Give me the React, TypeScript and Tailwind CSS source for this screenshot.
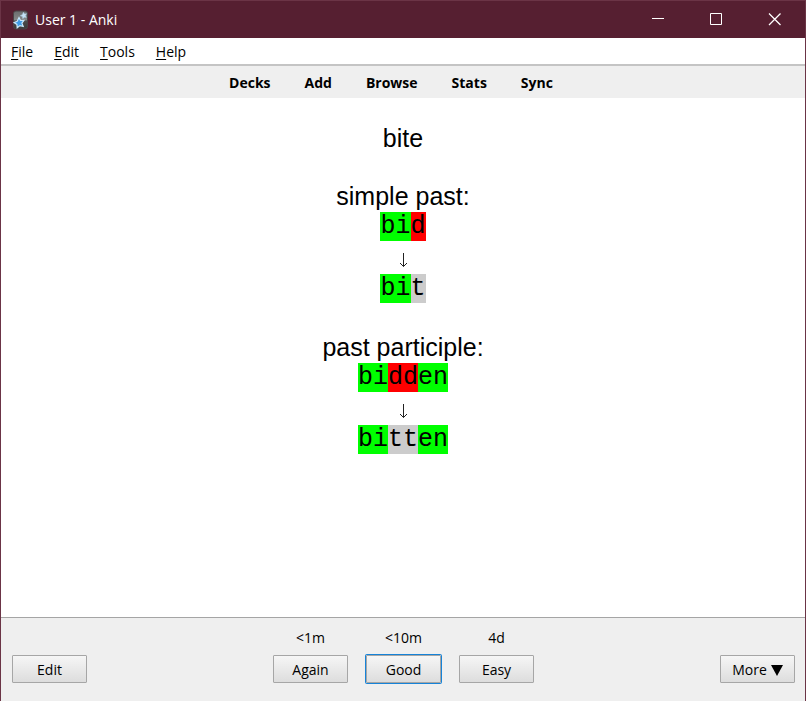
import type { ReactNode } from "react";

function AnkiIcon() {
  return (
    <svg width="16" height="20" viewBox="0 0 16 20" aria-hidden="true">
      <defs>
        <linearGradient id="card" x1="0" y1="0" x2="0" y2="1">
          <stop offset="0" stopColor="#6a6c6d" />
          <stop offset="0.5" stopColor="#858888" />
          <stop offset="0.55" stopColor="#4c4c4c" />
          <stop offset="1" stopColor="#3a3a3a" />
        </linearGradient>
      </defs>
      <rect x="1.5" y="1" width="14" height="18" rx="2.5" fill="url(#card)" stroke="#4a4346" />
      <path d="M11.5 2.2l1 1.7 2-.2-1 1.9.8 1.9-2-.3-1.5 1.5-.4-2.1-2.1-.9 1.9-.9z" fill="#c5e2f5" stroke="#a9cbe0" strokeWidth=".5" />
      <path
        d="M7 7.6l1.5 2.9 3.4-.2-2 2.8 1.3 3.3-3.3-.8-2.7 2.2-.3-3.4-2.8-1.8 3.1-1.4z"
        fill="#3f9be6"
        stroke="#c9e6f8"
        strokeWidth="1.2"
      />
    </svg>
  );
}

function WindowButton({ label, children }: { label: string; children: ReactNode }) {
  return (
    <button type="button" aria-label={label} className="flex h-9 w-[58px] items-center justify-center">
      <svg width="13" height="13" viewBox="0 0 13 13" fill="none" stroke="#fff" aria-hidden="true">
        {children}
      </svg>
    </button>
  );
}

const menus = ["File", "Edit", "Tools", "Help"];
const links = ["Decks", "Add", "Browse", "Stats", "Sync"];

type Kind = "same" | "wrong" | "missed";
const kindClass: Record<Kind, string> = {
  same: "bg-[#00ff00]",
  wrong: "bg-[#ff0000]",
  missed: "bg-[#cccccc]",
};

function Word({ parts }: { parts: [string, Kind][] }) {
  return (
    <div className="flex justify-center font-['Liberation_Mono',monospace]">
      {parts.map(([text, kind], i) => (
        <span key={i} className={kindClass[kind]}>
          {text}
        </span>
      ))}
    </div>
  );
}

function Comparison({ title, typed, correct }: { title: string; typed: [string, Kind][]; correct: [string, Kind][] }) {
  return (
    <section>
      <h2 className="pb-px">{title}</h2>
      <Word parts={typed} />
      <div className="flex h-[33px] items-center justify-center pt-1.5">
        <svg width="9" height="15" viewBox="0 0 9 15" fill="none" stroke="#222" aria-label="corrected to" role="img">
          <path d="M4.5 0v13.5M1 10l3.5 3.5L8 10" />
        </svg>
      </div>
      <Word parts={correct} />
    </section>
  );
}

function PushButton({ children, focused = false }: { children: ReactNode; focused?: boolean }) {
  return (
    <button
      type="button"
      className={
        "flex h-7 w-[75px] items-center justify-center gap-1 rounded-[1px] border border-[#a6a6a6] bg-linear-to-b from-[#f6f6f6] to-[#dddddd] pt-0.5 " +
        (focused ? "shadow-[0_0_0_1px_#1683d8]" : "")
      }
    >
      {children}
    </button>
  );
}

function Answer({ interval, label, focused }: { interval: string; label: string; focused?: boolean }) {
  return (
    <div className="flex flex-col items-center gap-[7px]">
      <span className="leading-5">{interval}</span>
      <PushButton focused={focused}>{label}</PushButton>
    </div>
  );
}

export default function App() {
  return (
    <div className="flex h-screen flex-col border-x border-[#6b3446] bg-white font-['Open_Sans','Noto_Sans',sans-serif] text-sm text-black">
      <header className="flex h-[38px] shrink-0 items-center border-t border-[#6b3446] bg-[#561f31] pr-0.5 pl-[11px] text-white">
        <AnkiIcon />
        <h1 className="ml-[7px] flex-1 text-sm">User 1 - Anki</h1>
        <WindowButton label="Minimize">
          <path d="M0 5.5h12" />
        </WindowButton>
        <WindowButton label="Maximize">
          <path d="M.5.5h11v11H.5z" />
        </WindowButton>
        <WindowButton label="Close">
          <path d="M1 .5l11.5 11.5M12.5 .5l-11.5 11.5" strokeWidth="1.3" />
        </WindowButton>
      </header>

      <nav aria-label="Menu" className="flex h-7 shrink-0 items-center gap-[21px] border-b-2 border-[#c4c4c4] px-2.5 pt-0.5">
        {menus.map((m) => (
          <button key={m} type="button">
            <span className="underline underline-offset-2">{m[0]}</span>
            {m.slice(1)}
          </button>
        ))}
      </nav>

      <nav
        aria-label="Main"
        className="flex h-8 shrink-0 items-center justify-center gap-[34px] bg-[#efefef] pt-0.5 pr-6 font-bold"
      >
        {links.map((l) => (
          <a key={l} href="#">
            {l}
          </a>
        ))}
      </nav>

      <main className="min-h-0 flex-1 overflow-hidden pt-[26px] text-center font-['Liberation_Sans',sans-serif] text-[25px] leading-[29px]">
        <p className="mb-[29px]">bite</p>
        <div className="flex flex-col gap-[30px]">
          <Comparison
            title="simple past:"
            typed={[["bi", "same"], ["d", "wrong"]]}
            correct={[["bi", "same"], ["t", "missed"]]}
          />
          <Comparison
            title="past participle:"
            typed={[["bi", "same"], ["dd", "wrong"], ["en", "same"]]}
            correct={[["bi", "same"], ["tt", "missed"], ["en", "same"]]}
          />
        </div>
      </main>

      <footer className="grid h-[84px] shrink-0 grid-cols-[1fr_auto_1fr] items-end border-t border-[#a5a5a5] bg-[#efefef] pr-2.5 pb-[18px] pl-[11px]">
        <PushButton>Edit</PushButton>
        <div className="flex gap-[18px]">
          <Answer interval="<1m" label="Again" />
          <Answer interval="<10m" label="Good" focused />
          <Answer interval="4d" label="Easy" />
        </div>
        <div className="flex justify-end">
          <PushButton>
            More
            <svg width="12" height="11" viewBox="0 0 12 11" aria-hidden="true">
              <path d="M0 0h12L6 11z" />
            </svg>
          </PushButton>
        </div>
      </footer>
    </div>
  );
}
